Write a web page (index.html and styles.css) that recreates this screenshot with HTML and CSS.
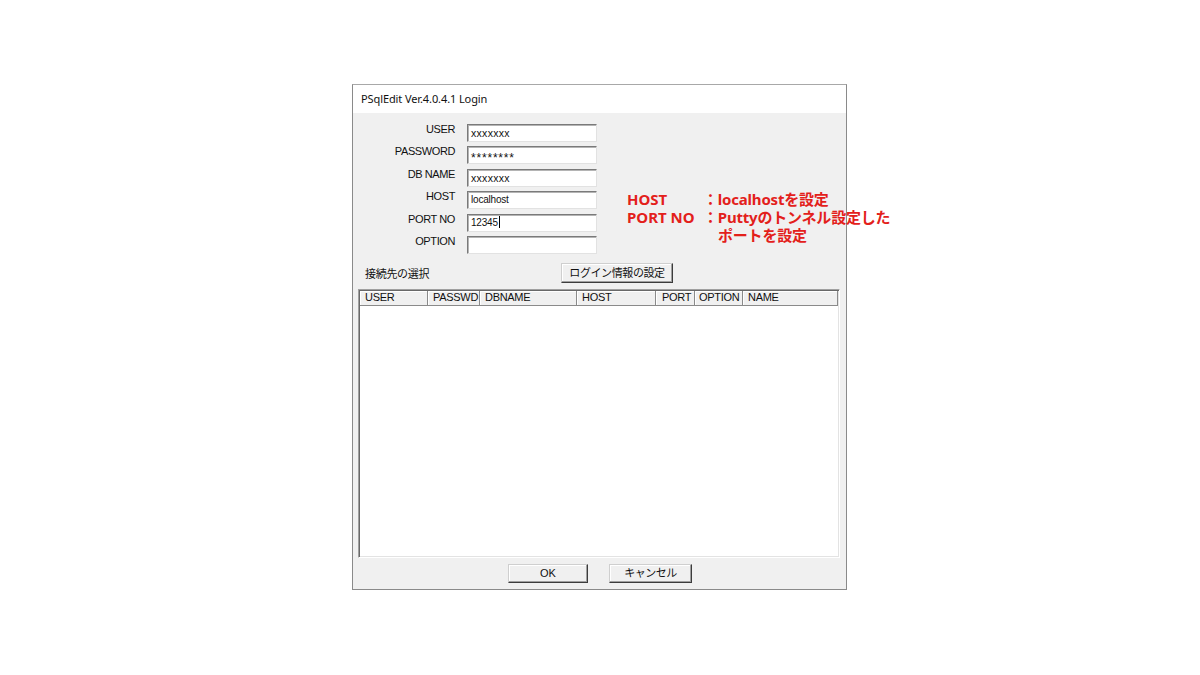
FILE: index.html
```html
<!DOCTYPE html>
<html lang="ja">
<head>
<meta charset="utf-8">
<title>PSqlEdit Login</title>
<link rel="stylesheet" href="styles.css">
</head>
<body>
<div class="page">
  <div class="window">
    <div class="titlebar">PSqlEdit Ver.4.0.4.1 Login</div>
    <div class="form">
      <div class="label">USER</div>
      <div class="input small">xxxxxxx</div>
      <div class="label">PASSWORD</div>
      <div class="input pass">********</div>
      <div class="label">DB NAME</div>
      <div class="input small">xxxxxxx</div>
      <div class="label">HOST</div>
      <div class="input">localhost</div>
      <div class="label">PORT NO</div>
      <div class="input">12345<span class="caret"></span></div>
      <div class="label">OPTION</div>
      <div class="input"></div>
    </div>
    <div class="section">
      <div class="section-label">接続先の選択</div>
      <div class="button setting">ログイン情報の設定</div>
    </div>
    <div class="list">
      <div class="list-header">
        <div class="col c1">USER</div>
        <div class="col c2">PASSWD</div>
        <div class="col c3">DBNAME</div>
        <div class="col c4">HOST</div>
        <div class="col c5">PORT</div>
        <div class="col c6">OPTION</div>
        <div class="col c7">NAME</div>
      </div>
    </div>
    <div class="actions">
      <div class="button ok">OK</div>
      <div class="button cancel">キャンセル</div>
    </div>
  </div>
  <div class="note">
    <div class="note-key">HOST</div>
    <div class="note-val">：localhostを設定</div>
    <div class="note-key">PORT NO</div>
    <div class="note-val">：Puttyのトンネル設定した</div>
    <div class="note-key"></div>
    <div class="note-val indent">ポートを設定</div>
  </div>
</div>
</body>
</html>
```

FILE: styles.css
```css
* { box-sizing: border-box; }
html, body { margin: 0; padding: 0; background: #ffffff; }
body {
  font-family: "Liberation Sans", "Noto Sans CJK JP", sans-serif;
  font-size: 11px;
  color: #000;
}
.page {
  position: relative;
  width: 1200px;
  height: 675px;
  padding-top: 84px;
}
.window {
  margin-left: 352px;
  width: 495px;
  height: 506px;
  border: 1px solid #8a8a8a;
  border-top-color: #a8a8a8;
  background: #f0f0f0;
  display: flex;
  flex-direction: column;
}
.titlebar {
  height: 28px;
  line-height: 28px;
  background: #ffffff;
  padding-left: 8px;
  font-family: "Noto Sans", "Noto Sans CJK JP", sans-serif;
  font-size: 11px;
  letter-spacing: -0.1px;
  color: #111;
}
.form {
  margin-top: 11px;
  display: grid;
  grid-template-columns: 102px 130px;
  grid-auto-rows: 18px;
  column-gap: 12px;
  row-gap: 4.4px;
}
.label {
  text-align: right;
  line-height: 12px;
  margin-top: -1px;
  letter-spacing: -0.4px;
  color: #111;
}
.input {
  background: #fff;
  border: 1px solid;
  border-color: #7a7a7a #e2e2e2 #e2e2e2 #7a7a7a;
  box-shadow: inset 1px 1px 0 #b4b4b4;
  padding-left: 3px;
  line-height: 16px;
  font-size: 10px;
  letter-spacing: -0.2px;
  color: #111;
  overflow: hidden;
  white-space: nowrap;
}
.input.small { font-size: 10.5px; letter-spacing: 0.3px; }
.input.pass { font-size: 12px; letter-spacing: 0.8px; line-height: 22px; }
.caret {
  display: inline-block;
  width: 1px;
  height: 12px;
  background: #000;
  vertical-align: -2px;
  margin-left: 1px;
}
.section {
  margin-top: 9px;
  height: 20px;
  display: flex;
  align-items: center;
}
.section-label {
  width: 208px;
  padding-left: 12px;
  font-family: "Noto Sans CJK JP", sans-serif;
  font-size: 11px;
  letter-spacing: -0.3px;
  color: #111;
}
.button {
  background: #f0f0f0;
  border: 1px solid;
  border-color: #cfcfcf #3c3c3c #3c3c3c #cfcfcf;
  box-shadow: inset -1px -1px 0 #a0a0a0, inset 1px 1px 0 #ffffff;
  text-align: center;
  font-family: "Liberation Sans", "Noto Sans CJK JP", sans-serif;
  font-size: 11px;
  color: #111;
}
.button.setting {
  width: 112px;
  height: 20px;
  line-height: 18px;
  letter-spacing: -0.4px;
}
.list {
  margin-top: 6px;
  margin-left: 5px;
  width: 482px;
  height: 269px;
  background: #fff;
  border: 1px solid;
  border-color: #a0a0a0 #ffffff #ffffff #a0a0a0;
  box-shadow: inset 1px 1px 0 #696969, inset -1px -1px 0 #e3e3e3;
  padding: 1px;
}
.list-header {
  display: flex;
  height: 15px;
}
.col {
  height: 15px;
  line-height: 13px;
  padding-left: 5px;
  background: #f0f0f0;
  border-right: 1px solid #8a8a8a;
  border-bottom: 1px solid #8a8a8a;
  box-shadow: inset 1px 1px 0 #ffffff;
  letter-spacing: -0.3px;
  color: #111;
  white-space: nowrap;
  overflow: hidden;
}
.c1 { width: 68px; }
.c2 { width: 52px; }
.c3 { width: 97px; }
.c4 { width: 79px; }
.c5 { width: 39px; padding-left: 6px; }
.c6 { width: 48px; padding-left: 4px; }
.c7 { width: 95px; }
.actions {
  margin-top: 6px;
  display: flex;
  justify-content: center;
  gap: 21px;
  padding-left: 1px;
}
.button.ok, .button.cancel {
  height: 19px;
  line-height: 17px;
}
.button.ok { width: 80px; }
.button.cancel { width: 83px; letter-spacing: -0.5px; }
.note {
  position: absolute;
  left: 627px;
  top: 190px;
  display: grid;
  grid-template-columns: 76px auto;
  font-family: "Noto Sans", "Noto Sans CJK JP", sans-serif;
  font-weight: bold;
  font-size: 15px;
  line-height: 18px;
  color: #e3201b;
  white-space: nowrap;
}
.note-val { letter-spacing: -0.2px; }
.note-val.indent { padding-left: 15px; }
```
